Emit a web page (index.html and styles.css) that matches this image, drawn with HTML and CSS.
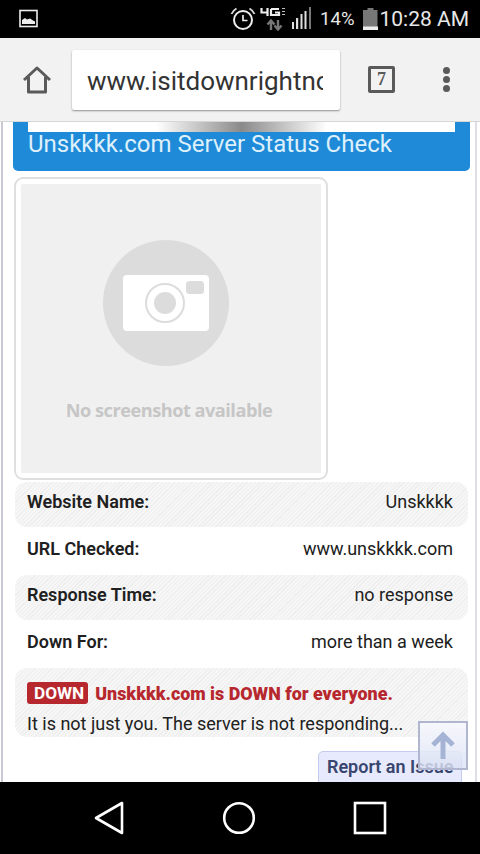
FILE: index.html
```html
<!DOCTYPE html>
<html lang="en">
<head>
<meta charset="utf-8">
<title>Unskkkk.com Server Status Check</title>
<link rel="stylesheet" href="styles.css">
</head>
<body>
<div class="phone">
  <header class="status">
    <svg class="status-pic" width="20" height="20" viewBox="0 0 20 20"><rect x="1" y="1.500" width="17" height="16" fill="none" stroke="#eee" stroke-width="1.600"/><path d="M3 15v-4l3-2 2 1.500 3-1 3 2 2 1V15z" fill="#eee"/></svg>
    <div class="status-right">
      <svg class="alarm" width="26" height="24" viewBox="0 0 26 24"><circle cx="13" cy="13" r="9" fill="none" stroke="#eee" stroke-width="2"/><path d="M13 8v5.500h4.500" fill="none" stroke="#eee" stroke-width="1.700"/><path d="M1.500 7q1.500-3.500 5-5.500M24.500 7q-1.500-3.500-5-5.500" fill="none" stroke="#ddd" stroke-width="1.800"/></svg>
      <svg class="net" width="30" height="24" viewBox="0 0 30 24"><path d="M1.500 1v4.500h6M7.500 1v8M11 2h8M11 2v6h8V5.500h-4" fill="none" stroke="#eee" stroke-width="2.200"/><path d="M22 1.500h3M22 4.500h3M22 7.500h3" fill="none" stroke="#bbb" stroke-width="1"/><path d="M11 23v-9M7.500 17.500 11 13.500l3.500 4M18 13v9M14.500 18.500l3.500 4 3.500-4" fill="none" stroke="#777" stroke-width="2.400"/></svg>
      <svg class="signal" width="20" height="24" viewBox="0 0 20 24"><path d="M1 15h2v7H1zM5 11h2.200v11H5zM9.500 7h2v15h-2zM13.500 4h2v18h-2z" fill="#ddd"/><path d="M18 0h2v22h-2z" fill="#777"/></svg>
      <span class="pct">14%</span>
      <svg class="batt" width="15" height="22" viewBox="0 0 15 22"><path d="M4.500 0h6v2h4v20H0V2h4.500z" fill="#777"/><rect y="18.500" width="15" height="3.500" fill="#eee"/></svg>
      <span class="clock">10:28 AM</span>
    </div>
  </header>

  <div class="toolbar">
    <svg class="home" width="30" height="28" viewBox="0 0 30 28"><path d="M2 14 15 2l13 12M6.500 11v15h17V11" fill="none" stroke="#5a5a5a" stroke-width="3" stroke-linejoin="round"/></svg>
    <div class="omnibox"><span class="url">www.isitdownrightnow.com</span></div>
    <div class="tabs">7</div>
    <div class="menu"><i></i><i></i><i></i></div>
  </div>

  <main class="viewport">
    <div class="page">
      <section class="banner">
        <div class="ad-strip"></div>
        <h1>Unskkkk.com Server Status Check</h1>
      </section>

      <div class="shot">
        <div class="shot-inner">
          <svg class="camera" width="126" height="126" viewBox="0 0 126 126"><circle cx="63" cy="63" r="63" fill="#dcdcdc"/><rect x="20" y="35" width="86" height="56" rx="4" fill="#fff"/><rect x="83" y="41" width="18" height="13" rx="3.500" fill="#dcdcdc"/><circle cx="62" cy="63" r="19" fill="none" stroke="#dcdcdc" stroke-width="2"/><circle cx="62" cy="63" r="11" fill="#dcdcdc"/></svg>
          <span class="no-shot">No screenshot available</span>
        </div>
      </div>

      <dl class="facts">
        <div class="fact stripe"><dt>Website Name:</dt><dd>Unskkkk</dd></div>
        <div class="fact"><dt>URL Checked:</dt><dd>www.unskkkk.com</dd></div>
        <div class="fact stripe"><dt>Response Time:</dt><dd>no response</dd></div>
        <div class="fact"><dt>Down For:</dt><dd>more than a week</dd></div>
      </dl>

      <div class="verdict stripe">
        <p class="verdict-head"><span class="badge">DOWN</span><strong>Unskkkk.com is DOWN for everyone.</strong></p>
        <p class="verdict-body">It is not just you. The server is not responding...</p>
      </div>

      <div class="report-row"><a class="report">Report an Issue</a></div>
    </div>
    <div class="to-top">
      <svg width="24" height="30" viewBox="0 0 24 30"><path d="M12 28V4M2 14 12 4l10 10" fill="none" stroke="#a5b3d5" stroke-width="5"/></svg>
    </div>
  </main>

  <nav class="navbar">
    <svg width="30" height="34" viewBox="0 0 30 34"><path d="M28 2v30L2 17z" fill="none" stroke="#fff" stroke-width="2.600" stroke-linejoin="round"/></svg>
    <svg width="34" height="34" viewBox="0 0 34 34"><circle cx="17" cy="17" r="14.800" fill="none" stroke="#fff" stroke-width="2.600"/></svg>
    <svg width="34" height="34" viewBox="0 0 34 34"><rect x="2" y="2" width="30" height="30" fill="none" stroke="#fff" stroke-width="2.600"/></svg>
  </nav>
</div>
</body>
</html>
```
FILE: styles.css
```css
* { box-sizing: border-box; }
html, body { margin: 0; padding: 0; }
body { font-family: Roboto, "Liberation Sans", sans-serif; background: #fff; }
.phone { width: 480px; height: 854px; display: flex; flex-direction: column; overflow: hidden; }

.status { height: 38px; flex: none; background: #000; display: flex; align-items: center; justify-content: space-between; padding: 0 11px 0 19px; color: #e8e8e8; }
.status-pic { display: block; }
.status-right { display: flex; align-items: center; }
.alarm { margin-right: 4px; }
.net { margin-right: 1px; }
.signal { margin-right: 9px; }
.pct { font-size: 18.500px; margin-right: 9px; }
.batt { margin-right: 1px; }
.clock { font-size: 21px; }

.toolbar { height: 84px; flex: none; background: #f2f2f2; display: flex; align-items: center; padding: 0 0 0 22px; border-bottom: 1px solid #d6d6d6; }
.home { flex: none; margin: 0 20px 0 0; }
.omnibox { width: 268px; height: 60px; margin-right: 28px; flex: none; background: #fff; border-radius: 2px; box-shadow: 0 1px 2px rgba(0,0,0,.4); display: flex; align-items: center; padding: 2px 17px 0 15px; overflow: hidden; }
.url { display: block; min-width: 0; font-size: 26px; color: #333; white-space: nowrap; overflow: hidden; }
.tabs { width: 27px; height: 27px; flex: none; border: 3px solid #5a5a5a; border-radius: 2px; font: bold 18px "Liberation Serif", serif; color: #5a5a5a; display: flex; align-items: center; justify-content: center; }
.menu { margin-left: 48px; display: flex; flex-direction: column; gap: 2px; }
.menu i { width: 7px; height: 7px; border-radius: 50%; background: #5a5a5a; display: block; }

.viewport { flex: 1; min-height: 0; position: relative; overflow: hidden; background: #fff; }
.page { height: 100%; margin: 0 3px 0 1px; padding: 0 5px 0 10px; border-left: 2px solid #c9c9d8; border-right: 2px solid #dedee6; }

.banner { height: 49px; background: #1f8bd8; border-radius: 0 0 5px 5px; padding: 0 15px; }
.ad-strip { height: 10px; background: linear-gradient(90deg, #fff 30%, #8a8a8a 50%, #fff 70%); }
.banner h1 { margin: 0; font-size: 24px; font-weight: 400; line-height: 25px; color: #def0fb; white-space: nowrap; }

.shot { width: 314px; height: 303px; margin: 6px 0 0 1px; border: 2px solid #dfdfdf; border-radius: 9px; padding: 5px; background: #fff; }
.shot-inner { height: 100%; background: #f0f0f0; display: flex; flex-direction: column; align-items: center; padding-top: 56px; }
.camera { display: block; margin-left: -11px; }
.no-shot { margin-top: 32px; font: bold 18.200px "Open Sans", "Liberation Sans", sans-serif; letter-spacing: -.5px; color: #c6c6c6; margin-left: -4px; white-space: nowrap; }

.stripe { background: repeating-linear-gradient(135deg, #f6f6f6 0 2px, #eeeeee 2px 3px); }
.facts { margin: 2px 0 0 2px; width: 453px; }
.fact { height: 45px; margin-bottom: 1.500px; display: flex; justify-content: space-between; align-items: center; padding: 0 15px 6px 12px; border-radius: 12px; font-size: 18px; color: #202020; }
.fact dt { font-weight: 600; }
.fact dd { margin: 0; }
.verdict { width: 453px; margin: 1px 0 0 2px; height: 69px; border-radius: 12px; padding: 14px 12px 0; font-size: 18px; color: #202020; }
.verdict p { margin: 0; white-space: nowrap; }
.verdict-head { display: flex; align-items: center; gap: 7px; color: #b7282e; font-weight: 700; }
.verdict-head strong { font-size: 17.900px; }
.badge { background: #b7282e; color: #fff; border-radius: 3px; padding: 2px 4px 2px 7px; font-size: 17.200px; line-height: 18px; }
.verdict-body { margin-top: 10px !important; line-height: 20px; }

.report-row { display: flex; justify-content: flex-end; margin-top: 14px; width: 449px; }
.report { display: block; width: 144px; height: 40px; background: #e6eafc; border: 1px solid #c3ccf0; border-radius: 5px; padding: 4px 0 0 8px; font-size: 18px; font-weight: 600; color: #39456f; white-space: nowrap; }

.to-top { position: absolute; left: 418px; top: 599px; width: 50px; height: 49px; border: 2px solid #b0b6cf; background: linear-gradient(rgba(246,248,253,.95), rgba(218,224,243,.8)); display: flex; align-items: center; justify-content: center; }

.navbar { height: 72px; flex: none; background: #000; display: flex; align-items: center; justify-content: space-between; padding: 0 93px 0 94px; }
```
